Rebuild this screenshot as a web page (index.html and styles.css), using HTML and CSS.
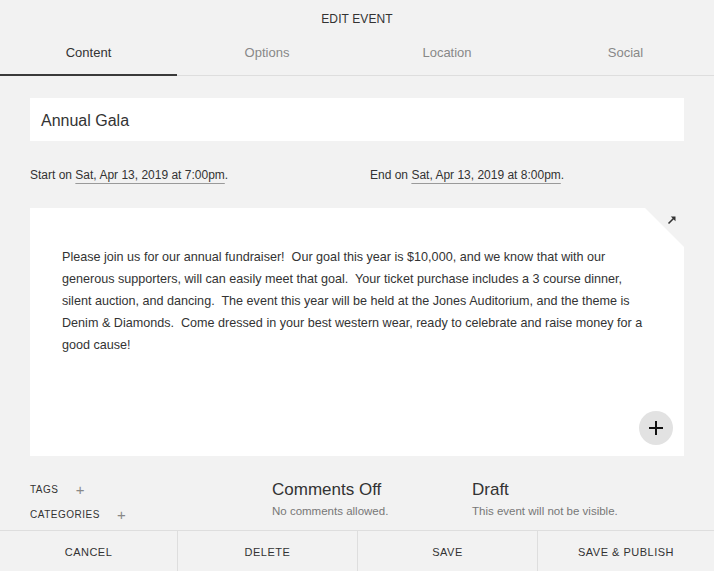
FILE: index.html
```html
<!DOCTYPE html>
<html lang="en">
<head>
<meta charset="utf-8">
<title>Edit Event</title>
<link rel="stylesheet" href="styles.css">
</head>
<body>
<div class="app">
  <header class="header">EDIT EVENT</header>
  <nav class="tabs">
    <div class="tab active">Content</div>
    <div class="tab">Options</div>
    <div class="tab">Location</div>
    <div class="tab">Social</div>
  </nav>

  <main class="content">
    <div class="title-box">Annual Gala</div>

    <div class="dates">
      <div>Start on <span class="date-link">Sat, Apr 13, 2019 at 7:00pm</span>.</div>
      <div>End on <span class="date-link">Sat, Apr 13, 2019 at 8:00pm</span>.</div>
    </div>

    <div class="editor-wrap">
      <div class="editor">
        <p class="body-text">Please join us for our annual fundraiser!&nbsp; Our goal this year is $10,000, and we know that with our<br>generous supporters, will can easily meet that goal.&nbsp; Your ticket purchase includes a 3 course dinner,<br>silent auction, and dancing.&nbsp; The event this year will be held at the Jones Auditorium, and the theme is<br>Denim &amp; Diamonds.&nbsp; Come dressed in your best western wear, ready to celebrate and raise money for a<br>good cause!</p>
      </div>
      <svg class="expand" width="10" height="10" viewBox="0 0 10 10" aria-hidden="true">
        <path d="M1.5 8.5 L7 3" stroke="#333" stroke-width="1.6" fill="none"/>
        <path d="M3.8 1.5 H8.5 V6.2 Z" fill="#333"/>
      </svg>
      <button class="add-btn" aria-label="Add">
        <svg width="16" height="16" viewBox="0 0 16 16" aria-hidden="true">
          <path d="M8 1 V15 M1 8 H15" stroke="#111" stroke-width="2" fill="none"/>
        </svg>
      </button>
    </div>

    <div class="meta">
      <div class="meta-labels">
        <div class="meta-label">TAGS <span class="plus">+</span></div>
        <div class="meta-label">CATEGORIES <span class="plus">+</span></div>
      </div>
      <div class="meta-status">
        <div class="status-title">Comments Off</div>
        <div class="status-sub">No comments allowed.</div>
      </div>
      <div class="meta-status">
        <div class="status-title">Draft</div>
        <div class="status-sub">This event will not be visible.</div>
      </div>
    </div>
  </main>

  <footer class="footer">
    <div class="fbtn">CANCEL</div>
    <div class="fbtn">DELETE</div>
    <div class="fbtn">SAVE</div>
    <div class="fbtn">SAVE &amp; PUBLISH</div>
  </footer>
</div>
</body>
</html>
```

FILE: styles.css
```css
* { box-sizing: border-box; }

html, body {
  margin: 0;
  padding: 0;
  background: #f2f2f2;
}

body {
  font-family: "Liberation Sans", Arial, sans-serif;
  color: #333;
}

.app {
  width: 714px;
  height: 571px;
  display: flex;
  flex-direction: column;
  overflow: hidden;
}

.header {
  height: 39px;
  line-height: 39px;
  text-align: center;
  font-size: 12px;
  color: #333;
  letter-spacing: 0.1px;
}

.tabs {
  display: grid;
  grid-template-columns: 177px 180px 180px 1fr;
  border-bottom: 1px solid #dedede;
}

.tab {
  position: relative;
  height: 36px;
  line-height: 27px;
  text-align: center;
  font-size: 13px;
  color: #888;
}

.tab.active {
  color: #333;
}

.tab.active::after {
  content: "";
  position: absolute;
  left: 0;
  right: 0;
  bottom: -1px;
  height: 2px;
  background: #3a3a3a;
}

.content {
  padding: 0 30px;
}

.title-box {
  margin-top: 22px;
  height: 43px;
  line-height: 43px;
  padding-top: 1px;
  background: #fff;
  padding-left: 11px;
  font-size: 16px;
  color: #333;
}

.dates {
  margin-top: 24px;
  display: grid;
  grid-template-columns: 340px 1fr;
  font-size: 12px;
  line-height: 20px;
  color: #333;
}

.date-link {
  text-decoration: underline;
  text-decoration-color: #9a9a9a;
  text-underline-offset: 4px;
  text-decoration-thickness: 1px;
}

.editor-wrap {
  position: relative;
  margin-top: 23px;
  height: 248px;
}

.editor {
  height: 100%;
  background: #fff;
  clip-path: polygon(0 0, calc(100% - 39px) 0, 100% 39px, 100% 100%, 0 100%);
  padding: 38px 32px 0 32px;
}

.body-text {
  margin: 0;
  font-size: 12.6px;
  line-height: 22px;
  white-space: nowrap;
  color: #333;
}

.expand {
  position: absolute;
  top: 7px;
  right: 7px;
}

.add-btn {
  position: absolute;
  right: 11px;
  bottom: 11px;
  width: 34px;
  height: 34px;
  border-radius: 50%;
  border: none;
  background: #e2e2e2;
  padding: 0;
  display: flex;
  align-items: center;
  justify-content: center;
}

.meta {
  margin-top: 24px;
  display: grid;
  grid-template-columns: 242px 200px 1fr;
}

.meta-label {
  font-size: 10px;
  letter-spacing: 0.5px;
  line-height: 20px;
  height: 25px;
  color: #333;
}

.plus {
  display: inline-block;
  margin-left: 14px;
  font-size: 15px;
  font-weight: 300;
  color: #888;
  vertical-align: -2px;
}

.status-title {
  font-size: 17px;
  line-height: 20px;
  color: #333;
}

.status-sub {
  margin-top: 3px;
  font-size: 11.5px;
  line-height: 16px;
  color: #777;
}

.footer {
  margin-top: auto;
  height: 43px;
  border-top: 1px solid #dedede;
  display: grid;
  grid-template-columns: 177px 180px 180px 1fr;
}

.fbtn {
  line-height: 42px;
  text-align: center;
  font-size: 11px;
  letter-spacing: 0.5px;
  color: #333;
}

.fbtn + .fbtn {
  border-left: 1px solid #dedede;
}
```
